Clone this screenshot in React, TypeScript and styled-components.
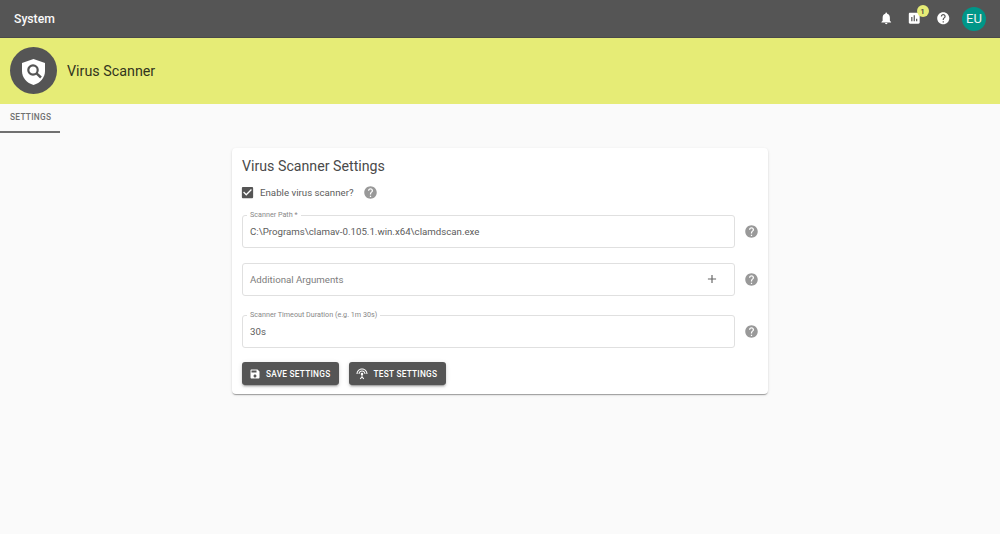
import React from "react";
import styled, { createGlobalStyle } from "styled-components";

const GlobalStyle = createGlobalStyle`
  html, body {
    margin: 0;
    padding: 0;
    background: #fafafa;
    font-family: Roboto, "Liberation Sans", sans-serif;
  }
`;

const Page = styled.div`
  width: 1000px;
  height: 534px;
  overflow: hidden;
  background: #fafafa;
`;

const TopBar = styled.header`
  height: 37px;
  background: #555555;
  border-bottom: 1px solid #4a4a4a;
  display: flex;
  align-items: center;
  padding: 0 14px;
  box-sizing: content-box;
`;

const AppTitle = styled.div`
  flex: 1;
  color: #fafafa;
  font-size: 12.2px;
  font-weight: 500;
`;

const TopIcons = styled.div`
  display: flex;
  align-items: center;
  gap: 14px;
`;

const IconWrap = styled.span`
  position: relative;
  display: flex;
`;

const Badge = styled.span`
  position: absolute;
  top: -6.25px;
  right: -6.75px;
  width: 12px;
  height: 12px;
  border-radius: 50%;
  background: #e6ec76;
  color: #444;
  font-size: 8px;
  font-weight: 500;
  display: flex;
  align-items: center;
  justify-content: center;
`;

const Avatar = styled.div`
  width: 24px;
  height: 24px;
  margin-left: -2.25px;
  border-radius: 50%;
  background: #009688;
  color: #f3f3f3;
  font-size: 13px;
  display: flex;
  align-items: center;
  justify-content: center;
`;

const Banner = styled.div`
  height: 66px;
  background: #e6ec76;
  display: flex;
  align-items: center;
  padding-left: 10px;
  gap: 10px;
`;

const BannerLogo = styled.div`
  width: 47px;
  height: 47px;
  padding-top: 3px;
  margin-top: -1px;
  box-sizing: border-box;
  border-radius: 50%;
  background: #555555;
  display: flex;
  align-items: center;
  justify-content: center;
`;

const BannerTitle = styled.h1`
  margin: 0;
  font-size: 14.3px;
  font-weight: 400;
  color: #33351e;
`;

const Tabs = styled.nav`
  height: 29px;
  display: flex;
`;

const Tab = styled.div`
  width: 60px;
  padding-left: 10px;
  box-sizing: border-box;
  border-bottom: 2px solid #707070;
  color: #707070;
  font-size: 8.3px;
  font-weight: 500;
  letter-spacing: 0.3px;
  line-height: 26px;
`;

const Content = styled.main`
  display: flex;
  justify-content: center;
  padding-top: 15px;
`;

const Card = styled.section`
  width: 536px;
  height: 246px;
  box-sizing: border-box;
  padding: 9px 10px 0;
  background: #fff;
  border-radius: 4px;
  box-shadow: 0 2px 1px -1px rgba(0, 0, 0, 0.2), 0 1px 1px 0 rgba(0, 0, 0, 0.14),
    0 1px 3px 0 rgba(0, 0, 0, 0.12);
`;

const CardTitle = styled.h2`
  margin: 0;
  font-size: 14.2px;
  line-height: 18px;
  font-weight: 400;
  color: #4a4a4a;
`;

const CheckRow = styled.div`
  display: flex;
  align-items: center;
  height: 20px;
  margin-top: 7px;
  font-size: 9.7px;
  color: #5c5c5c;
`;

const CheckBoxIcon = styled.span`
  display: flex;
  margin-left: -2px;
`;

const CheckLabel = styled.span`
  margin-left: 5px;
  margin-right: 9.5px;
`;

const FieldRow = styled.div<{ $top: number }>`
  display: flex;
  align-items: flex-end;
  margin-top: ${(p) => p.$top}px;
  gap: 8.5px;
`;

const HelpSlot = styled.span`
  display: flex;
  margin-bottom: 9px;
`;

const Outline = styled.fieldset<{ $labelled?: boolean }>`
  flex: 0 0 493px;
  margin: 0;
  height: ${(p) => (p.$labelled ? 37 : 33)}px;
  box-sizing: border-box;
  padding: 0 15px ${(p) => (p.$labelled ? 3 : 1)}px 7px;
  border: 1px solid #e0e0e0;
  border-radius: 3px;
  display: flex;
  align-items: center;
  justify-content: space-between;
`;

const Legend = styled.legend`
  padding: 0 3px;
  margin-left: -3px;
  font-size: 7.2px;
  line-height: 8px;
  color: #888;
`;

const Value = styled.span<{ $hint?: boolean }>`
  font-size: 9.7px;
  color: ${(p) => (p.$hint ? "#7d7d7d" : "#5c5c5c")};
`;

const Buttons = styled.div`
  display: flex;
  gap: 10px;
  margin-top: 14px;
`;

const Button = styled.button`
  height: 23px;
  padding: 0 9px 0 7px;
  display: flex;
  align-items: center;
  gap: 5px;
  border: 0;
  border-radius: 3px;
  background: #555555;
  color: #fff;
  font-family: inherit;
  font-size: 8.3px;
  font-weight: 500;
  letter-spacing: 0.25px;
  box-shadow: 0 3px 1px -2px rgba(0, 0, 0, 0.2), 0 2px 2px 0 rgba(0, 0, 0, 0.14),
    0 1px 5px 0 rgba(0, 0, 0, 0.12);
`;

const Icon = ({ d, size, color }: { d: string; size: number; color: string }) => (
  <svg width={size} height={size} viewBox="0 0 24 24" fill={color}>
    <path d={d} />
  </svg>
);

const ShieldSearch = () => (
  <svg width="23" height="26" viewBox="0 0 23 26">
    <path d="M11.5 0L23 4v8c0 6.5-4.7 12-11.5 14C4.7 24 0 18.5 0 12V4z" fill="#fff" />
    <circle cx="11" cy="11" r="4.7" fill="none" stroke="#555" strokeWidth="2.2" />
    <path d="M14.5 14.3L19 18.5" stroke="#555" strokeWidth="2.4" fill="none" />
  </svg>
);

const bell = "M12 22c1.1 0 2-.9 2-2h-4c0 1.1.89 2 2 2zm6-6v-5c0-3.07-1.64-5.64-4.5-6.32V4c0-.83-.67-1.5-1.5-1.5s-1.5.67-1.5 1.5v.68C7.63 5.36 6 7.92 6 11v5l-2 2v1h16v-1l-2-2z";
const poll = "M19 3H5c-1.1 0-2 .9-2 2v14c0 1.1.9 2 2 2h14c1.1 0 2-.9 2-2V5c0-1.1-.9-2-2-2zM9 17H7v-7h2v7zm4 0h-2V7h2v10zm4 0h-2v-4h2v4z";
const help = "M12 2C6.48 2 2 6.48 2 12s4.48 10 10 10 10-4.48 10-10S17.52 2 12 2zm1 17h-2v-2h2v2zm2.07-7.75l-.9.92C13.45 12.9 13 13.5 13 15h-2v-.5c0-1.1.45-2.1 1.17-2.83l1.24-1.26c.37-.36.59-.86.59-1.41 0-1.1-.9-2-2-2s-2 .9-2 2H8c0-2.21 1.79-4 4-4s4 1.79 4 4c0 .88-.36 1.68-.93 2.25z";
const save = "M17 3H5c-1.11 0-2 .9-2 2v14c0 1.1.89 2 2 2h14c1.1 0 2-.9 2-2V7l-4-4zm-5 16c-1.66 0-3-1.34-3-3s1.34-3 3-3 3 1.34 3 3-1.34 3-3 3zm3-10H5V5h10v4z";
const checkbox = "M19 3H5c-1.11 0-2 .9-2 2v14c0 1.1.89 2 2 2h14c1.11 0 2-.9 2-2V5c0-1.1-.89-2-2-2zm-9 14l-5-5 1.41-1.41L10 14.17l7.59-7.59L19 8l-9 9z";
const plus = "M19 13h-6v6h-2v-6H5v-2h6V5h2v6h6v2z";
const antenna = "M12 5c-3.87 0-7 3.13-7 7h2c0-2.76 2.24-5 5-5s5 2.24 5 5h2c0-3.87-3.13-7-7-7zm1 9.29c.88-.39 1.5-1.26 1.5-2.29 0-1.38-1.12-2.5-2.5-2.5S9.5 10.62 9.5 12c0 1.02.62 1.9 1.5 2.29v3.3L7.59 21 9 22.41l3-3 3 3L16.41 21 13 17.59v-3.3zM12 1C5.93 1 1 5.93 1 12h2c0-4.97 4.03-9 9-9s9 4.03 9 9h2c0-6.07-4.93-11-11-11z";

const HelpIcon = () => <Icon d={help} size={15} color="#999" />;

const FieldHelp = () => (
  <HelpSlot>
    <HelpIcon />
  </HelpSlot>
);

export default function App() {
  return (
    <Page>
      <GlobalStyle />
      <TopBar>
        <AppTitle>System</AppTitle>
        <TopIcons>
          <Icon d={bell} size={14.5} color="#fff" />
          <IconWrap>
            <Icon d={poll} size={14.5} color="#fff" />
            <Badge>1</Badge>
          </IconWrap>
          <Icon d={help} size={14.5} color="#fff" />
          <Avatar>EU</Avatar>
        </TopIcons>
      </TopBar>
      <Banner>
        <BannerLogo>
          <ShieldSearch />
        </BannerLogo>
        <BannerTitle>Virus Scanner</BannerTitle>
      </Banner>
      <Tabs>
        <Tab>SETTINGS</Tab>
      </Tabs>
      <Content>
        <Card>
          <CardTitle>Virus Scanner Settings</CardTitle>
          <CheckRow>
            <CheckBoxIcon>
              <Icon d={checkbox} size={15} color="#555" />
            </CheckBoxIcon>
            <CheckLabel>Enable virus scanner?</CheckLabel>
            <HelpIcon />
          </CheckRow>
          <FieldRow $top={9}>
            <Outline $labelled>
              <Legend>Scanner Path *</Legend>
              <Value>C:\Programs\clamav-0.105.1.win.x64\clamdscan.exe</Value>
            </Outline>
            <FieldHelp />
          </FieldRow>
          <FieldRow $top={15}>
            <Outline>
              <Value $hint>Additional Arguments</Value>
              <Icon d={plus} size={14} color="#666" />
            </Outline>
            <FieldHelp />
          </FieldRow>
          <FieldRow $top={15}>
            <Outline $labelled>
              <Legend>Scanner Timeout Duration (e.g. 1m 30s)</Legend>
              <Value>30s</Value>
            </Outline>
            <FieldHelp />
          </FieldRow>
          <Buttons>
            <Button>
              <Icon d={save} size={12} color="#fff" />
              SAVE SETTINGS
            </Button>
            <Button>
              <Icon d={antenna} size={12} color="#fff" />
              TEST SETTINGS
            </Button>
          </Buttons>
        </Card>
      </Content>
    </Page>
  );
}
